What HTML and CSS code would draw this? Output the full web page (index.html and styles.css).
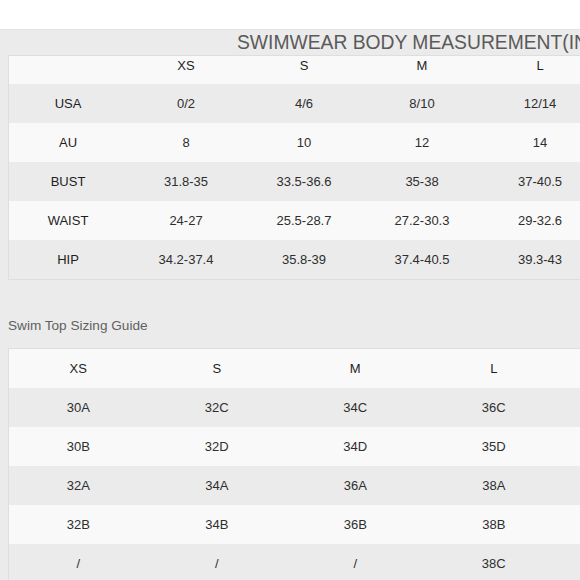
FILE: index.html
```html
<!DOCTYPE html>
<html lang="en">
<head>
<meta charset="utf-8">
<title>Swimwear Size Guide</title>
<link rel="stylesheet" href="styles.css">
</head>
<body>
<div class="spacer"></div>
<main class="panel">
  <h1 class="title">SWIMWEAR BODY MEASUREMENT(INCH)</h1>
  <div class="table body-table">
    <div class="row head">
      <span></span><span>XS</span><span>S</span><span>M</span><span>L</span>
    </div>
    <div class="row alt">
      <span class="label">USA</span><span>0/2</span><span>4/6</span><span>8/10</span><span>12/14</span>
    </div>
    <div class="row">
      <span class="label">AU</span><span>8</span><span>10</span><span>12</span><span>14</span>
    </div>
    <div class="row alt">
      <span class="label">BUST</span><span>31.8-35</span><span>33.5-36.6</span><span>35-38</span><span>37-40.5</span>
    </div>
    <div class="row">
      <span class="label">WAIST</span><span>24-27</span><span>25.5-28.7</span><span>27.2-30.3</span><span>29-32.6</span>
    </div>
    <div class="row alt">
      <span class="label">HIP</span><span>34.2-37.4</span><span>35.8-39</span><span>37.4-40.5</span><span>39.3-43</span>
    </div>
  </div>

  <h2 class="subtitle">Swim Top Sizing Guide</h2>
  <div class="table top-table">
    <div class="row head2">
      <span class="label">XS</span><span class="label">S</span><span class="label">M</span><span class="label">L</span><span></span>
    </div>
    <div class="row alt">
      <span>30A</span><span>32C</span><span>34C</span><span>36C</span><span></span>
    </div>
    <div class="row">
      <span>30B</span><span>32D</span><span>34D</span><span>35D</span><span></span>
    </div>
    <div class="row alt">
      <span>32A</span><span>34A</span><span>36A</span><span>38A</span><span></span>
    </div>
    <div class="row">
      <span>32B</span><span>34B</span><span>36B</span><span>38B</span><span></span>
    </div>
    <div class="row alt">
      <span>/</span><span>/</span><span>/</span><span>38C</span><span></span>
    </div>
  </div>
</main>
</body>
</html>
```

FILE: styles.css
```css
html, body {
  margin: 0;
  padding: 0;
  overflow: hidden;
  background: #ffffff;
}

body {
  font-family: "Liberation Sans", Arial, sans-serif;
  color: #333333;
  width: 580px;
  height: 580px;
}

.spacer {
  height: 29px;
  background: #ffffff;
}

.panel {
  background: #ebebeb;
  border-top: 1px solid #e2e2e2;
  padding-left: 8px;
  padding-bottom: 40px;
  width: 900px;
}

.title {
  margin: 0;
  padding-left: 229px;
  height: 25px;
  line-height: 26px;
  font-size: 19.3px;
  font-weight: normal;
  color: #5a5a5a;
  white-space: nowrap;
}

.table {
  border: 1px solid #dedede;
  border-right: none;
}

.row {
  display: grid;
  align-items: center;
  justify-items: center;
  height: 39px;
  font-size: 13px;
  color: #2e2e2e;
  background: #f9f9f9;
}

.row.alt {
  background: #ebebeb;
}

.body-table {
  width: 620px;
}

.body-table .row {
  grid-template-columns: repeat(5, 118px);
}

.body-table .row.head {
  height: 28px;
  align-items: start;
  line-height: 20px;
}

.top-table {
  width: 720px;
}

.top-table .row {
  grid-template-columns: repeat(5, 138.5px);
}

.head span,
.label {
  color: #1e1e1e;
}

.subtitle {
  margin: 0;
  padding-top: 36px;
  padding-bottom: 12px;
  line-height: 20px;
  font-size: 13.6px;
  font-weight: normal;
  color: #606060;
}
```
